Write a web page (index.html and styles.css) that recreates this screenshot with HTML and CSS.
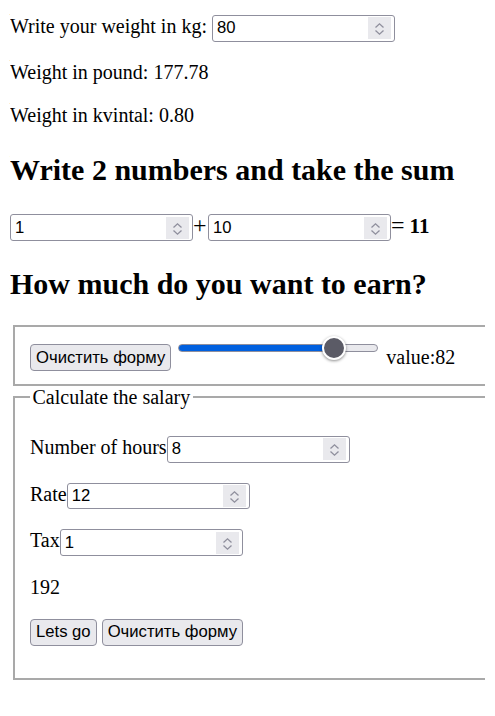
FILE: index.html
```html
<!DOCTYPE html>
<html lang="en">
<head>
<meta charset="utf-8">
<title>Calculators</title>
<link rel="stylesheet" href="styles.css">
</head>
<body>
<div class="weight-row">Write your weight in kg: <span class="num"><input type="number" value="80"><span class="spin"><svg width="23" height="22" viewBox="0 0 23 22"><path d="M7.5 10.5 L11.5 6.8 L15.5 10.5 M7.5 13.5 L11.5 17.2 L15.5 13.5" /></svg></span></span></div>
<p class="result">Weight in pound: 177.78</p>
<p class="result">Weight in kvintal: 0.80</p>

<h2 class="title">Write 2 numbers and take the sum</h2>
<div class="sum-row"><span class="num"><input type="number" value="1"><span class="spin"><svg width="23" height="22" viewBox="0 0 23 22"><path d="M7.5 10.5 L11.5 6.8 L15.5 10.5 M7.5 13.5 L11.5 17.2 L15.5 13.5" /></svg></span></span><span class="op plus">+</span><span class="num"><input type="number" value="10"><span class="spin"><svg width="23" height="22" viewBox="0 0 23 22"><path d="M7.5 10.5 L11.5 6.8 L15.5 10.5 M7.5 13.5 L11.5 17.2 L15.5 13.5" /></svg></span></span><span class="op">=</span> <b class="total">11</b></div>

<h2 class="title earn">How much do you want to earn?</h2>
<fieldset class="box slider-box">
  <div class="slider-row">
    <button type="button" class="btn reset-btn">Очистить форму</button>
    <input class="range" type="range" min="0" max="100" value="82">
    <span class="range-value">value:82</span>
  </div>
</fieldset>
<fieldset class="box salary-box">
  <legend class="legend">Calculate the salary</legend>
  <p class="field">Number of hours<span class="num"><input type="number" value="8"><span class="spin"><svg width="23" height="22" viewBox="0 0 23 22"><path d="M7.5 10.5 L11.5 6.8 L15.5 10.5 M7.5 13.5 L11.5 17.2 L15.5 13.5" /></svg></span></span></p>
  <p class="field">Rate<span class="num"><input type="number" value="12"><span class="spin"><svg width="23" height="22" viewBox="0 0 23 22"><path d="M7.5 10.5 L11.5 6.8 L15.5 10.5 M7.5 13.5 L11.5 17.2 L15.5 13.5" /></svg></span></span></p>
  <p class="field">Tax<span class="num"><input type="number" value="1"><span class="spin"><svg width="23" height="22" viewBox="0 0 23 22"><path d="M7.5 10.5 L11.5 6.8 L15.5 10.5 M7.5 13.5 L11.5 17.2 L15.5 13.5" /></svg></span></span></p>
  <p class="field">192</p>
  <p class="field buttons"><button type="button" class="btn">Lets go</button> <button type="button" class="btn">Очистить форму</button></p>
</fieldset>
</body>
</html>
```

FILE: styles.css
```css
html {
  background: #fff;
}

body {
  margin: 10px;
  font-family: "Liberation Serif", "Times New Roman", serif;
  font-size: 20px;
  line-height: normal;
  color: #000;
}

.weight-row {
  margin-top: 5px;
}

.result {
  margin: 19px 0 20px;
}

.title {
  font-size: 30px;
  font-weight: bold;
  margin: 26px 0 25px;
}

.sum-row {
  margin-top: 25px;
}

.op {
  font-size: 24px;
}

.op.plus {
  margin-right: 1.5px;
}

.total {
  font-size: 21px;
}

.title.earn {
  margin: 26px 0 24.5px;
}

.num {
  display: inline-flex;
  align-items: center;
  box-sizing: border-box;
  width: 183px;
  height: 26.67px;
  padding: 0 3px 0 3px;
  border: 1px solid #8f8f9d;
  border-radius: 3px;
  background: #fff;
  vertical-align: baseline;
}

.num input {
  flex: 1;
  min-width: 0;
  margin: 0;
  padding: 0 0 0 1px;
  border: 0;
  outline: none;
  background: transparent;
  font-family: "Liberation Sans", Arial, sans-serif;
  font-size: 16.67px;
  color: #000;
  -moz-appearance: textfield;
  appearance: textfield;
}

.num input::-webkit-inner-spin-button,
.num input::-webkit-outer-spin-button {
  -webkit-appearance: none;
  margin: 0;
}

.spin {
  display: flex;
  width: 23px;
  height: 22px;
  background: #e9e9ed;
}

.spin path {
  fill: none;
  stroke: #8f8f9d;
  stroke-width: 1.3;
}

/* group boxes run past the right edge of the window, as in the original */
.box {
  box-sizing: border-box;
  margin: 0 -10px 0 3px;
  padding: 7px 15px 12.5px;
  border-style: solid none solid solid;
  border-width: 2px 0 2px 2px;
  border-color: #a9a9a9;
  min-width: 0;
}

.slider-row {
  display: flex;
  align-items: flex-start;
}

.btn {
  box-sizing: border-box;
  margin: 0;
  padding: 2.5px 5px;
  border: 1px solid #8f8f9d;
  border-radius: 4px;
  background: #e9e9ed;
  color: #000;
  font-family: "Liberation Sans", Arial, sans-serif;
  font-size: 16.67px;
  line-height: normal;
}

.reset-btn {
  margin-top: 10px;
}

.range {
  -webkit-appearance: none;
  appearance: none;
  width: 200px;
  height: 24px;
  margin: 2px 0 0 7px;
  padding: 0;
  background: transparent;
}

.range::-webkit-slider-runnable-track {
  box-sizing: border-box;
  height: 8px;
  border: 1px solid #8f8f9d;
  border-radius: 4px;
  background: linear-gradient(#0060df, #0060df) 0 0 / 78% 100% no-repeat, #e9e9ed;
}

.range::-webkit-slider-thumb {
  -webkit-appearance: none;
  box-sizing: border-box;
  width: 24px;
  height: 24px;
  margin-top: -9px;
  border: 2px solid #fff;
  border-radius: 50%;
  background: #5b5b66;
  box-shadow: 0 1px 3px rgba(0, 0, 0, 0.45);
}

.range-value {
  margin: 12px 0 0 8px;
}

.legend {
  padding: 0 2.5px;
}

.field {
  margin: 20px 0;
}
```
